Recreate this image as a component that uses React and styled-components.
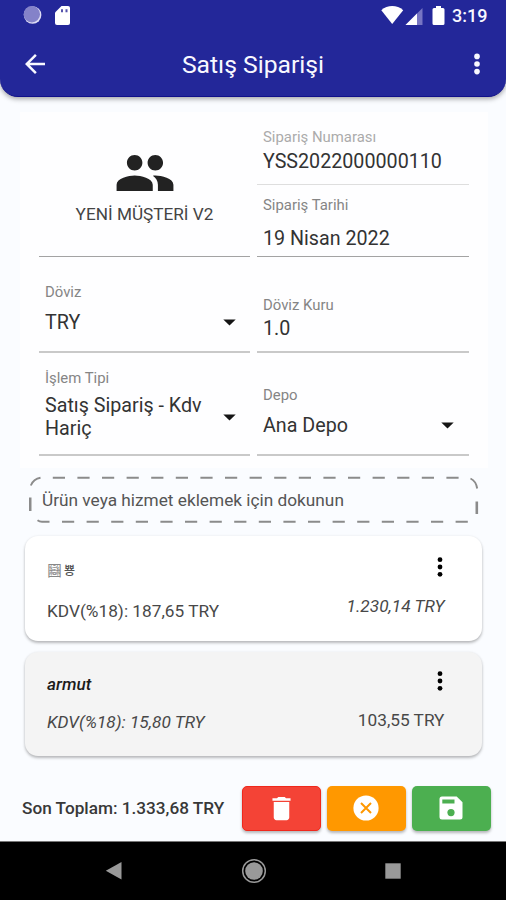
import React from 'react';
import styled, { createGlobalStyle } from 'styled-components';
import { MdPeople, MdArrowBack, MdDelete } from 'react-icons/md';

const GlobalStyle = createGlobalStyle`
  * { box-sizing: border-box; }
  body { margin: 0; background: #fafcff; font-family: Roboto, 'Noto Sans CJK KR', sans-serif; }
  svg { display: block; flex: none; }
`;

const Screen = styled.div`
  width: 506px;
  height: 900px;
  display: flex;
  flex-direction: column;
  overflow: hidden;
  background: #fafcff;
`;

const Header = styled.header`
  height: 97px;
  flex: none;
  background: #232799;
  color: #f8f8ff;
  border-radius: 0 0 18px 18px;
  border-bottom: 1px solid #10108a;
  box-shadow: 0 2px 5px rgba(0, 0, 0, 0.35);
`;

const StatusBar = styled.div`
  height: 32px;
  display: flex;
  align-items: center;
  justify-content: space-between;
  padding: 0 18.5px 0 23px;
`;

const StatusGroup = styled.div`
  display: flex;
  align-items: center;
`;

const Clock = styled.span`
  font-size: 18px;
  font-weight: 500;
  line-height: 20px;
  margin-left: 7px;
`;

const Toolbar = styled.div`
  height: 64px;
  display: grid;
  grid-template-columns: 60px 1fr 60px;
  align-items: center;
`;

const ToolbarIcon = styled.div`
  display: flex;
  justify-content: ${(p) => (p.$end ? 'flex-end' : 'flex-start')};
  padding: ${(p) => (p.$end ? '0 26px 0 0' : '0 0 0 20px')};
`;

const Title = styled.h1`
  margin: 2px 0 0;
  text-align: center;
  font-size: 24.7px;
  line-height: 30px;
  font-weight: 400;
`;

const Form = styled.section`
  height: 356px;
  flex: none;
  margin: 15px 18px 0 20px;
  padding: 0 19px;
  display: grid;
  grid-template-columns: 211px 212px;
  column-gap: 7px;
  background: #fefeff;
`;

const Column = styled.div`
  display: flex;
  flex-direction: column;
`;

const Field = styled.div`
  height: ${(p) => p.$h}px;
  padding: ${(p) => p.$top}px 6px 0;
  display: flex;
  flex-direction: column;
  align-items: ${(p) => (p.$center ? 'center' : 'stretch')};
  border-bottom: ${(p) => p.$thick || 1}px solid ${(p) => p.$line || '#a3a3a3'};
`;

const Label = styled.span`
  font-size: 14.9px;
  line-height: 18px;
  color: ${(p) => (p.$muted ? '#ababab' : '#858585')};
`;

const ValueRow = styled.div`
  margin-top: ${(p) => p.$gap}px;
  padding-right: ${(p) => p.$inset || 8.5}px;
  display: flex;
  align-items: center;
  justify-content: space-between;
`;

const Value = styled.span`
  font-size: 19.7px;
  line-height: 23px;
  color: #333;
`;

const CustomerName = styled.span`
  font-size: 17.2px;
  line-height: 20px;
  color: #444;
`;

const AddArea = styled.div`
  position: relative;
  height: 47px;
  flex: none;
  margin: 8px 27px 0 29px;
  padding: 1px 0 0 13px;
  display: flex;
  align-items: center;
  font-size: 17.25px;
  line-height: 20px;
  color: #555;
`;

const DashOutline = styled.svg`
  position: absolute;
  left: 0;
  top: 0;
`;

const Card = styled.article`
  height: ${(p) => p.$h}px;
  flex: none;
  margin: ${(p) => p.$gap}px 24px 0 24.5px;
  padding: 0 37.5px 0 22.5px;
  display: flex;
  justify-content: space-between;
  border-radius: 13px;
  background: ${(p) => (p.$shade ? '#f4f4f4' : '#ffffff')};
  box-shadow: 0 2px 3px rgba(0, 0, 0, 0.26), 0 0 3px rgba(0, 0, 0, 0.06);
`;

const CardSide = styled.div`
  display: flex;
  flex-direction: column;
  align-items: ${(p) => (p.$end ? 'flex-end' : 'flex-start')};
  padding-top: ${(p) => p.$top}px;
`;

const MenuSlot = styled.div`
  padding-right: 2px;
  margin-bottom: ${(p) => p.$gap}px;
`;

const ItemName = styled.span`
  font-size: 17.2px;
  line-height: 20px;
  font-style: italic;
  font-weight: 500;
  color: #1c1c1c;
`;

const GlyphName = styled.span`
  display: flex;
  gap: 2px;
  line-height: 20px;
  font-family: 'Noto Sans CJK KR', sans-serif;
  font-size: 15px;
  color: #888;
`;

const SmallGlyph = styled.span`
  font-size: 12px;
  font-weight: 500;
  color: #555;
`;

const Amount = styled.span`
  margin-top: ${(p) => p.$gap || 0}px;
  font-size: 17.25px;
  line-height: 20px;
  font-style: ${(p) => (p.$italic ? 'italic' : 'normal')};
  color: #484848;
  white-space: nowrap;
`;

const Footer = styled.footer`
  height: 86px;
  flex: none;
  padding: 30px 15.5px 0 22px;
  display: flex;
  align-items: flex-start;
  border-bottom: 1px solid #777;
`;

const Total = styled.span`
  flex: 1;
  padding-top: 12px;
  font-size: 17.2px;
  line-height: 20px;
  font-weight: 500;
  color: #383838;
  white-space: nowrap;
`;

const Actions = styled.div`
  display: flex;
  gap: 6.5px;
`;

const ActionButton = styled.button`
  width: 78.5px;
  height: 44.5px;
  padding: 0;
  border: ${(p) => (p.$edge ? `1px solid ${p.$edge}` : '0')};
  border-radius: 5px;
  display: flex;
  align-items: center;
  justify-content: center;
  color: #fff;
  background: ${(p) => p.$bg};
  box-shadow: 0 2px 3px rgba(0, 0, 0, 0.28);
`;

const NavBar = styled.nav`
  flex: 1;
  padding: 0 105px;
  display: flex;
  align-items: center;
  justify-content: space-between;
  background: #000;
`;

const Dots = ({ r = 2.4, step = 7.3 }) => (
  <svg width="6" height="22" viewBox="-3 -11 6 22" fill="currentColor">
    <circle cy={-step} r={r} />
    <circle r={r} />
    <circle cy={step} r={r} />
  </svg>
);

const Caret = () => (
  <svg width="13" height="7" viewBox="0 0 13 7">
    <path d="M0.3 0.4h12.4L6.5 6.6z" fill="#151515" />
  </svg>
);

const StatusLeft = () => (
  <svg width="50" height="22" viewBox="0 0 50 22">
    <circle cx="9.6" cy="10" r="8.8" fill="#dddbf4" />
    <circle cx="8.8" cy="9.2" r="8.2" fill="#8482c9" />
    <path d="M38.5 1h6.5q2 0 2 2v15q0 2-2 2h-11q-2 0-2-2V7.5z" fill="#fff" />
    <path d="M38 4.2h2v3h-2zM42.5 4.2h2v3h-2z" fill="#5553ad" />
  </svg>
);

const StatusRight = () => (
  <svg width="64" height="22" viewBox="0 0 64 22" fill="#fff">
    <path d="M0.3 5.2C6.5-0.4 16-0.4 22.2 5.2L11.2 19z" />
    <path d="M41.5 3v17H24.5z" fill="#7775c3" />
    <path d="M36 8.6V20H24.5z" />
    <path d="M55 1h5v2h2q1.5 0 1.5 1.5v14q0 1.5-1.5 1.5h-9q-1.5 0-1.5-1.5v-14Q51.5 3 53 3h2z" />
  </svg>
);

const CancelIcon = () => (
  <svg width="26" height="26" viewBox="-13 -13 26 26">
    <circle r="12.6" fill="#fff" />
    <path d="M-5-5L5 5M5-5L-5 5" stroke="#ff9800" strokeWidth="2" />
  </svg>
);

const SaveIcon = () => (
  <svg width="24" height="24" viewBox="0 0 24 24">
    <path d="M3 0.5h14.7L23.5 6.3V21q0 2.5-2.5 2.5H3Q0.5 23.5 0.5 21V3Q0.5 0.5 3 0.5z" fill="#fff" />
    <path d="M3.3 3.5h12.2v4H3.3z" fill="#4caf50" />
    <circle cx="12" cy="16.6" r="3.6" fill="#4caf50" />
  </svg>
);

const dashes = (start, count, y) =>
  Array.from({ length: count }, (_, i) => `M${(start + i * 24.6).toFixed(2)} ${y}h12.2`).join('');

const AddOutline = () => (
  <DashOutline width="450" height="47" viewBox="0 0 450 47" fill="none" stroke="#8b8b8b" strokeWidth="1.9">
    <path d={dashes(23.8, 17, 1.8)} />
    <path d={dashes(33, 17, 45.8)} />
    <path d="M8.5 44.3Q10.5 45.8 13 45.8h7.5" />
    <path d="M1.8 9.5Q4.5 3 11.5 1.8M441.5 2.5Q447 5 448.2 12.5" />
    <path d="M1.2 21.5v13.5M447.8 25.5v12.5" strokeWidth="2.6" />
  </DashOutline>
);

export default function App() {
  return (
    <Screen>
      <GlobalStyle />
      <Header>
        <StatusBar>
          <StatusGroup><StatusLeft /></StatusGroup>
          <StatusGroup><StatusRight /><Clock>3:19</Clock></StatusGroup>
        </StatusBar>
        <Toolbar>
          <ToolbarIcon><MdArrowBack size={30} /></ToolbarIcon>
          <Title>Satış Siparişi</Title>
          <ToolbarIcon $end><Dots r={2.8} step={7.6} /></ToolbarIcon>
        </Toolbar>
      </Header>

      <Form>
        <Column>
          <Field $h={144.5} $top={30} $center>
            <MdPeople size={62} color="#222" />
            <CustomerName>YENİ MÜŞTERİ V2</CustomerName>
          </Field>
          <Field $h={96.5} $top={26.5} $line="#c9c9c9" $thick={2}>
            <Label>Döviz</Label>
            <ValueRow $gap={10}><Value>TRY</Value><Caret /></ValueRow>
          </Field>
          <Field $h={103} $top={16} $line="#c9c9c9" $thick={2}>
            <Label>İşlem Tipi</Label>
            <ValueRow $gap={7}><Value>Satış Sipariş - Kdv<br />Hariç</Value><Caret /></ValueRow>
          </Field>
        </Column>
        <Column>
          <Field $h={73} $top={16} $line="#dedede">
            <Label $muted>Sipariş Numarası</Label>
            <ValueRow $gap={3.5}><Value>YSS2022000000110</Value></ValueRow>
          </Field>
          <Field $h={71.5} $top={11}>
            <Label>Sipariş Tarihi</Label>
            <ValueRow $gap={13}><Value>19 Nisan 2022</Value></ValueRow>
          </Field>
          <Field $h={96.5} $top={39} $line="#c9c9c9" $thick={2}>
            <Label>Döviz Kuru</Label>
            <ValueRow $gap={3.5}><Value>1.0</Value></ValueRow>
          </Field>
          <Field $h={103} $top={33} $line="#c9c9c9" $thick={2}>
            <Label>Depo</Label>
            <ValueRow $gap={10} $inset={9}><Value>Ana Depo</Value><Caret /></ValueRow>
          </Field>
        </Column>
      </Form>

      <AddArea>
        <AddOutline />
        Ürün veya hizmet eklemek için dokunun
      </AddArea>

      <Card $h={105} $gap={13}>
        <CardSide $top={24}>
          <GlyphName>圝<SmallGlyph>뿅</SmallGlyph></GlyphName>
          <Amount $gap={21}>KDV(%18): 187,65 TRY</Amount>
        </CardSide>
        <CardSide $end $top={19.5}>
          <MenuSlot $gap={18.5}><Dots /></MenuSlot>
          <Amount $italic>1.230,14 TRY</Amount>
        </CardSide>
      </Card>
      <Card $h={104} $gap={11} $shade>
        <CardSide $top={21.5}>
          <ItemName>armut</ItemName>
          <Amount $gap={18.5} $italic>KDV(%18): 15,80 TRY</Amount>
        </CardSide>
        <CardSide $end $top={18}>
          <MenuSlot $gap={18}><Dots /></MenuSlot>
          <Amount>103,55 TRY</Amount>
        </CardSide>
      </Card>

      <Footer>
        <Total>Son Toplam: 1.333,68 TRY</Total>
        <Actions>
          <ActionButton $bg="#f44336" $edge="#f0281c" aria-label="Sil"><MdDelete size={31} /></ActionButton>
          <ActionButton $bg="#ff9800" aria-label="İptal"><CancelIcon /></ActionButton>
          <ActionButton $bg="#4caf50" aria-label="Kaydet"><SaveIcon /></ActionButton>
        </Actions>
      </Footer>

      <NavBar>
        <svg width="17" height="20" viewBox="0 0 17 20"><path d="M16.5 1v17.5L0.8 9.7z" fill="#999" /></svg>
        <svg width="26" height="26" viewBox="-13 -13 26 26">
          <circle r="11.3" fill="none" stroke="#999" strokeWidth="1.5" />
          <circle r="8.8" fill="#999" />
        </svg>
        <svg width="16" height="16" viewBox="0 0 16 16"><path d="M0.3 0.3h15.4v15.4H0.3z" fill="#999" /></svg>
      </NavBar>
    </Screen>
  );
}
